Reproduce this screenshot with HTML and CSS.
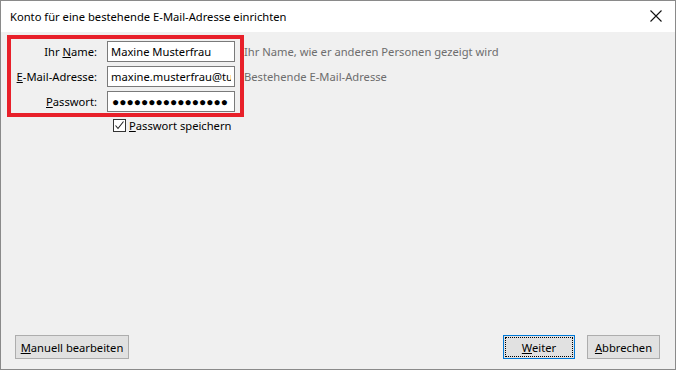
FILE: index.html
```html
<!DOCTYPE html>
<html lang="de">
<head>
  <meta charset="UTF-8">
  <title>Konto einrichten</title>
  <link rel="stylesheet" href="styles.css">
</head>
<body>

<div class="window">
  <div class="titlebar">
    <span class="title">Konto für eine bestehende E-Mail-Adresse einrichten</span>
    <span class="close">
      <svg width="12" height="12" viewBox="0 0 12 12"><path d="M0.5 0.5 L11.5 11.5 M11.5 0.5 L0.5 11.5" stroke="#111" stroke-width="1.1" fill="none"/></svg>
    </span>
  </div>

  <div class="content">
    <div class="form-area">
      <div class="highlight">
        <div class="row">
          <label for="name">Ihr <u>N</u>ame:</label>
          <input type="text" id="name" value="Maxine Musterfrau">
        </div>
        <div class="row">
          <label for="email"><u>E</u>-Mail-Adresse:</label>
          <input type="text" id="email" value="maxine.musterfrau@tu">
        </div>
        <div class="row">
          <label for="pw"><u>P</u>asswort:</label>
          <input type="text" id="pw" class="pw" value="●●●●●●●●●●●●●●●●">
        </div>
      </div>
      <div class="hints">
        <div class="hint">Ihr Name, wie er anderen Personen gezeigt wird</div>
        <div class="hint">Bestehende E-Mail-Adresse</div>
      </div>
    </div>

    <div class="remember">
      <span class="checkbox">
        <svg width="11" height="11" viewBox="0 0 11 11"><path d="M1.5 5.5 L4 8.5 L9.5 1.5" stroke="#222" stroke-width="1.1" fill="none"/></svg>
      </span>
      <span><u>P</u>asswort speichern</span>
    </div>

    <div class="footer">
      <button class="btn manual"><u>M</u>anuell bearbeiten</button>
      <div class="right-buttons">
        <button class="btn primary"><u>W</u>eiter</button>
        <button class="btn"><u>A</u>bbrechen</button>
      </div>
    </div>
  </div>
</div>

</body>
</html>
```

FILE: styles.css
```css
html, body {
  margin: 0;
  padding: 0;
  background: #ffffff;
}

body {
  font-family: 'Noto Sans', 'Open Sans', sans-serif;
  font-size: 11.2px;
  color: #000;
}

.window {
  width: 674px;
  height: 368px;
  border: 1px solid #8a8a8a;
  display: flex;
  flex-direction: column;
  background: #f0f0f0;
}

.titlebar {
  height: 31px;
  background: #ffffff;
  display: flex;
  align-items: center;
  justify-content: space-between;
  padding: 0 9px 0 9px;
}

.title {
  font-size: 11.2px;
  color: #000;
  margin-top: -1px;
}

.close {
  display: flex;
  width: 12px;
  height: 12px;
  margin-right: 4px;
  margin-top: -1px;
}

.content {
  flex: 1;
  display: flex;
  flex-direction: column;
}

.form-area {
  display: flex;
  margin-top: 3px;
  margin-left: 6px;
}

.highlight {
  border: 4px solid #e8202a;
  padding: 2px 5px 1px 0;
  display: flex;
  flex-direction: column;
  gap: 4px;
}

.row {
  display: flex;
  align-items: center;
  height: 21px;
}

.row label {
  width: 86px;
  text-align: right;
  margin-right: 10px;
  white-space: nowrap;
}

.row input {
  width: 120px;
  height: 19px;
  box-sizing: content-box;
  padding: 0 3px;
  border: 1px solid #7a7a7a;
  font-family: 'Noto Sans', 'Open Sans', sans-serif;
  font-size: 11.2px;
  color: #000;
  background: #fff;
  margin: 0;
  outline: none;
}

.row input.pw {
  font-size: 12px;
  letter-spacing: 0;
  padding-left: 4px;
  width: 119px;
}

.hints {
  display: flex;
  flex-direction: column;
  gap: 4px;
  padding-top: 6px;
  margin-left: 0;
}

.hint {
  height: 21px;
  line-height: 21px;
  color: #6d6d6d;
  white-space: nowrap;
}

.remember {
  display: flex;
  align-items: center;
  gap: 3px;
  margin-left: 112px;
  margin-top: 0;
  height: 16px;
}

.checkbox {
  width: 11px;
  height: 11px;
  border: 1px solid #333;
  background: #fff;
  display: flex;
}

.footer {
  margin-top: auto;
  display: flex;
  justify-content: space-between;
  align-items: center;
  padding: 0 15px 10px 14px;
}

.right-buttons {
  display: flex;
  gap: 12px;
}

.btn {
  height: 24px;
  background: #e1e1e1;
  border: 1px solid #adadad;
  font-family: 'Noto Sans', 'Open Sans', sans-serif;
  font-size: 11.2px;
  color: #000;
  padding: 0;
  margin: 0;
}

.manual {
  width: 114px;
}

.primary {
  width: 72px;
  border: 1px solid #0078d7;
  outline: 1px dotted #000;
  outline-offset: -3px;
}

.right-buttons .btn:last-child {
  width: 73px;
}
```
